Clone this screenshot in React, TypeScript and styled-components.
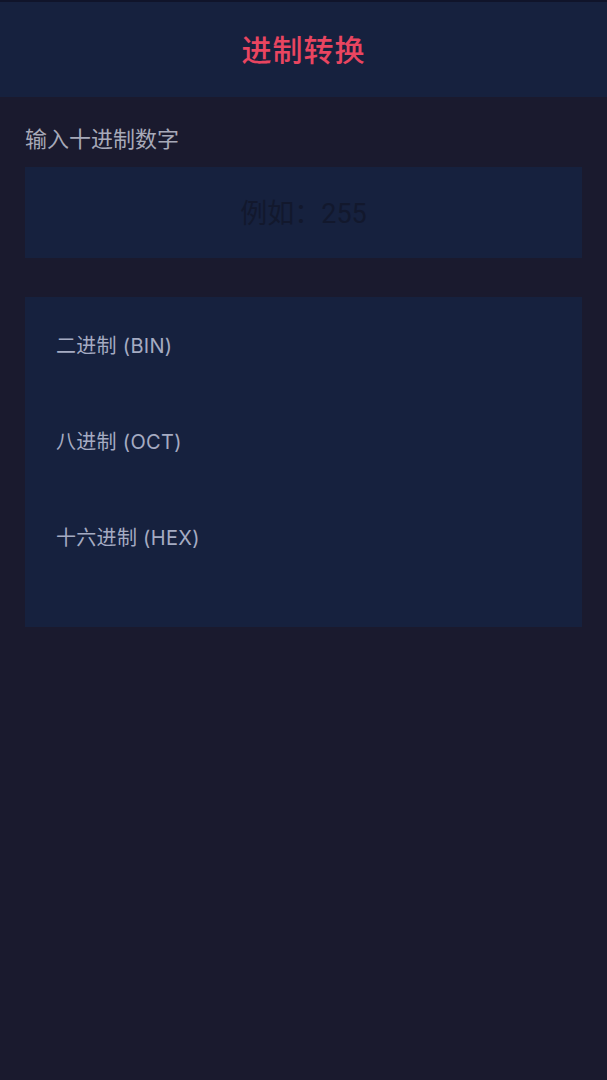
import React from "react";
import styled, { createGlobalStyle } from "styled-components";

const Global = createGlobalStyle`
  html, body {
    margin: 0;
    padding: 0;
    background: #1a1a2e;
  }
  body {
    font-family: "Noto Sans CJK SC", "Noto Sans", sans-serif;
  }
`;

const Page = styled.div`
  min-height: 1080px;
  background: #1a1a2e;
  display: flex;
  flex-direction: column;
`;

const Header = styled.header`
  height: 95px;
  border-top: 2px solid #10142a;
  background: #16213e;
  display: flex;
  align-items: center;
  justify-content: center;
`;

const Title = styled.h1`
  margin: 0 0 4px;
  font-size: 30px;
  font-weight: 500;
  color: #e94560;
  letter-spacing: 1px;
`;

const Main = styled.main`
  padding: 22px 25px 0;
  display: flex;
  flex-direction: column;
`;

const Label = styled.label`
  font-size: 22px;
  line-height: 36px;
  color: #a7a9b8;
`;

const Input = styled.input`
  margin-top: 12px;
  height: 91px;
  box-sizing: border-box;
  padding: 2px 0 0;
  border: none;
  outline: none;
  background: #16213e;
  text-align: center;
  font-family: Roboto, "Noto Sans CJK SC", sans-serif;
  font-size: 27px;
  color: #e0e0e0;
  &::placeholder {
    color: #12182d;
  }
`;

const Card = styled.section`
  margin-top: 39px;
  background: #16213e;
  padding: 30px 31px 12px;
  display: flex;
  flex-direction: column;
`;

const Row = styled.div`
  height: 96px;
  display: flex;
  flex-direction: column;
`;

const RowLabel = styled.div`
  font-family: Inter, "Noto Sans CJK SC", sans-serif;
  font-size: 20px;
  line-height: 38px;
  letter-spacing: 0.3px;
  color: #a5abc2;
`;

const Value = styled.div`
  font-family: "Liberation Mono", monospace;
  font-size: 20px;
  color: #e0e0e0;
  word-break: break-all;
`;

const rows = [
  { label: "二进制 (BIN)", value: "" },
  { label: "八进制 (OCT)", value: "" },
  { label: "十六进制 (HEX)", value: "" },
];

export default function App() {
  return (
    <>
      <Global />
      <Page>
        <Header>
          <Title>进制转换</Title>
        </Header>
        <Main>
          <Label>输入十进制数字</Label>
          <Input placeholder="例如：255" />
          <Card>
            {rows.map((r) => (
              <Row key={r.label}>
                <RowLabel>{r.label}</RowLabel>
                <Value>{r.value}</Value>
              </Row>
            ))}
          </Card>
        </Main>
      </Page>
    </>
  );
}
